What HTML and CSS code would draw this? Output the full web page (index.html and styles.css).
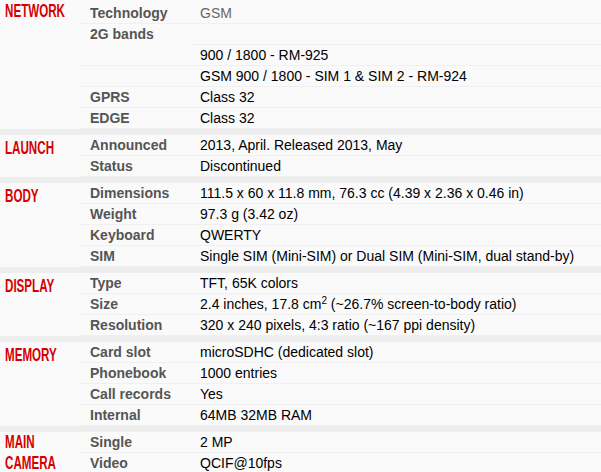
FILE: index.html
```html
<!DOCTYPE html>
<html>
<head>
<meta charset="utf-8">
<link rel="stylesheet" href="styles.css">
</head>
<body>
<div class="specs">
  <section class="sec">
    <h2 class="sec-title sec-title--top"><span>NETWORK</span></h2>
    <div class="rows">
      <div class="row"><div class="ttl">Technology</div><div class="nfo link">GSM</div></div>
      <div class="row"><div class="ttl no-line">2G bands</div><div class="nfo"></div></div>
      <div class="row"><div class="ttl"></div><div class="nfo">900 / 1800 - RM-925</div></div>
      <div class="row"><div class="ttl"></div><div class="nfo">GSM 900 / 1800 - SIM 1 &amp; SIM 2 - RM-924</div></div>
      <div class="row"><div class="ttl">GPRS</div><div class="nfo">Class 32</div></div>
      <div class="row"><div class="ttl">EDGE</div><div class="nfo">Class 32</div></div>
    </div>
  </section>
  <section class="sec">
    <h2 class="sec-title"><span>LAUNCH</span></h2>
    <div class="rows">
      <div class="row"><div class="ttl">Announced</div><div class="nfo">2013, April. Released 2013, May</div></div>
      <div class="row"><div class="ttl">Status</div><div class="nfo">Discontinued</div></div>
    </div>
  </section>
  <section class="sec">
    <h2 class="sec-title"><span>BODY</span></h2>
    <div class="rows">
      <div class="row"><div class="ttl">Dimensions</div><div class="nfo">111.5 x 60 x 11.8 mm, 76.3 cc (4.39 x 2.36 x 0.46 in)</div></div>
      <div class="row"><div class="ttl">Weight</div><div class="nfo">97.3 g (3.42 oz)</div></div>
      <div class="row"><div class="ttl">Keyboard</div><div class="nfo">QWERTY</div></div>
      <div class="row"><div class="ttl">SIM</div><div class="nfo">Single SIM (Mini-SIM) or Dual SIM (Mini-SIM, dual stand-by)</div></div>
    </div>
  </section>
  <section class="sec">
    <h2 class="sec-title"><span>DISPLAY</span></h2>
    <div class="rows">
      <div class="row"><div class="ttl">Type</div><div class="nfo">TFT, 65K colors</div></div>
      <div class="row"><div class="ttl">Size</div><div class="nfo">2.4 inches, 17.8 cm<sup>2</sup> (~26.7% screen-to-body ratio)</div></div>
      <div class="row"><div class="ttl">Resolution</div><div class="nfo">320 x 240 pixels, 4:3 ratio (~167 ppi density)</div></div>
    </div>
  </section>
  <section class="sec">
    <h2 class="sec-title"><span>MEMORY</span></h2>
    <div class="rows">
      <div class="row"><div class="ttl">Card slot</div><div class="nfo">microSDHC (dedicated slot)</div></div>
      <div class="row"><div class="ttl">Phonebook</div><div class="nfo">1000 entries</div></div>
      <div class="row"><div class="ttl">Call records</div><div class="nfo">Yes</div></div>
      <div class="row"><div class="ttl">Internal</div><div class="nfo">64MB 32MB RAM</div></div>
    </div>
  </section>
  <section class="sec">
    <h2 class="sec-title sec-title--two"><span>MAIN<br>CAMERA</span></h2>
    <div class="rows">
      <div class="row"><div class="ttl">Single</div><div class="nfo">2 MP</div></div>
      <div class="row"><div class="ttl">Video</div><div class="nfo">QCIF@10fps</div></div>
    </div>
  </section>
</div>
</body>
</html>
```
FILE: styles.css
```css
html, body {
  margin: 0;
  background: #fafafa;
}
body {
  font-family: "Liberation Sans", Arial, sans-serif;
  font-size: 14px;
  color: #000;
}
.specs {
  padding-top: 3px;
}
.sec {
  display: flex;
  border-bottom: 6px solid #eeeeee;
}
.sec-title {
  flex: none;
  width: 80px;
  box-sizing: border-box;
  margin: 0;
  padding: 3px 0 0 5px;
  font-family: "Liberation Sans", Arial, sans-serif;
  font-weight: bold;
  font-size: 18px;
  line-height: 21px;
  color: #d50000;
}
.sec-title--top {
  padding-top: 0;
  line-height: 17px;
}
.sec-title--two {
  padding-top: 0;
}
.sec-title span {
  display: inline-block;
  white-space: nowrap;
  transform: scaleX(0.645);
  transform-origin: 0 0;
}
.rows {
  flex: 1;
  min-width: 0;
}
.row {
  display: flex;
  height: 21px;
}
.ttl, .nfo {
  box-sizing: border-box;
  border-bottom: 1px solid #f0f0f0;
  line-height: 20px;
  padding-left: 10px;
  white-space: nowrap;
}
.ttl {
  flex: none;
  width: 110px;
  font-weight: bold;
  color: #555;
}
.ttl.no-line {
  border-bottom-color: transparent;
}
.nfo {
  flex: 1;
}
.nfo.link {
  color: #666;
}
sup {
  font-size: 10px;
  line-height: 0;
  vertical-align: 5px;
}
```
